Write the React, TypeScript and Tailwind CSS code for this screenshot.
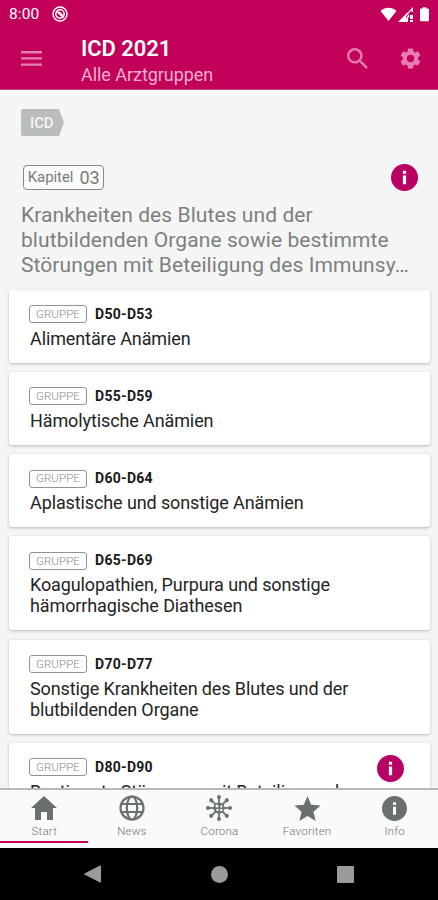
import React from "react";

type Group = { code: string; lines: string[]; info?: boolean; height: string };

const groups: Group[] = [
  { code: "D50-D53", lines: ["Alimentäre Anämien"], height: "h-[73px]" },
  { code: "D55-D59", lines: ["Hämolytische Anämien"], height: "h-[73px]" },
  { code: "D60-D64", lines: ["Aplastische und sonstige Anämien"], height: "h-[73px]" },
  { code: "D65-D69", lines: ["Koagulopathien, Purpura und sonstige", "hämorrhagische Diathesen"], height: "h-[94px]" },
  { code: "D70-D77", lines: ["Sonstige Krankheiten des Blutes und der", "blutbildenden Organe"], height: "h-[94px]" },
  { code: "D80-D90", lines: ["Bestimmte Störungen mit Beteiligung des"], info: true, height: "h-[94px]" },
];

function InfoIcon({ className }: { className: string }) {
  return (
    <svg viewBox="2 2 20 20" className={className} fill="currentColor">
      <circle cx="12" cy="12" r="10" />
      <path d="M10.8 10.6h2.4v6.4h-2.4zM10.8 7h2.4v2.2h-2.4z" fill="#fff" />
    </svg>
  );
}

function StatusBar() {
  return (
    <div className="flex h-7 items-center pl-[9px] pr-2 text-white">
      <span className="w-[43px] text-[15.500px] leading-7 tracking-[0.1px]">8:00</span>
      <svg viewBox="0 0 16 16" className="size-4" fill="none" stroke="#fff">
        <circle cx="8" cy="8" r="7" strokeWidth="1.4" />
        <circle cx="8" cy="8" r="4.2" strokeWidth="1.5" />
        <path d="M4.5 5l7 6.5M7 6l4 4" strokeWidth="1.7" />
      </svg>
      <div className="ml-auto flex items-center">
        <svg viewBox="0 0 17 15" className="h-[14px] w-[17px]" fill="#fff">
          <path d="M8.5 15L0 4.3C4.8-.3 12.200-.3 17 4.300z" />
        </svg>
        <svg viewBox="0 0 16 16" className="ml-px h-4 w-4" fill="#fff">
          <path d="M0 16L15 1v5h-1.500V4L8 10.500V16z" />
          <path d="M8 12.500L11 8v3l-1 1v4H8zM12 9h3v4h-3zM12 14h3v2h-3z" />
        </svg>
        <svg viewBox="0 0 10 16" className="mr-px ml-[6px] h-4 w-[9px]" fill="#fff">
          <path d="M1 2h2V.5h4V2h2q1 0 1 1v12q0 1-1 1H1q-1 0-1-1V3q0-1 1-1z" />
        </svg>
      </div>
    </div>
  );
}

function Header() {
  return (
    <header className="h-[90px] shrink-0 border-b border-[#b44f7d] bg-[#c30059]">
      <StatusBar />
      <div className="flex h-[61px] items-center pl-[21px] pr-[17px] text-[#e580ae]">
        <svg viewBox="0 0 21 15" className="h-[15px] w-[21px]" fill="currentColor">
          <path d="M0 0h21v2.400H0zM0 6.200h21v2.400H0zM0 12.400h21v2.400H0z" />
        </svg>
        <div className="ml-[39px] flex-1 pt-[6px] whitespace-nowrap">
          <h1 className="text-[22px] leading-[27px] font-semibold tracking-[-0.05px] text-white">ICD 2021</h1>
          <p className="text-[18px] leading-[26px] tracking-[-0.05px] text-[#f0b0cd]">Alle Arztgruppen</p>
        </div>
        <svg viewBox="3 3 17.500 17.500" className="size-[21px]" fill="currentColor">
          <path d="M15.500 14h-.79l-.28-.27A6.471 6.471 0 0 0 16 9.500 6.500 6.500 0 1 0 9.500 16c1.610 0 3.090-.59 4.230-1.570l.27.28v.79l5 4.990L20.490 19l-4.990-5zm-6 0C7.010 14 5 11.990 5 9.500S7.010 5 9.500 5 14 7.010 14 9.500 11.990 14 9.500 14z" />
        </svg>
        <svg viewBox="2 2 20 20" className="ml-8 size-[21px]" fill="currentColor">
          <path d="M19.140 12.940c.04-.3.06-.61.06-.94 0-.32-.02-.64-.07-.94l2.030-1.580c.18-.14.23-.41.12-.61l-1.920-3.320c-.12-.22-.37-.29-.59-.22l-2.390.96c-.5-.38-1.030-.7-1.620-.94l-.36-2.540c-.04-.24-.24-.41-.48-.41h-3.840c-.24 0-.43.17-.47.41l-.36 2.540c-.59.24-1.130.57-1.620.94l-2.390-.96c-.22-.08-.47 0-.59.22L2.740 8.870c-.12.21-.08.47.12.61l2.030 1.580c-.05.3-.09.63-.09.940s.02.64.07.940l-2.030 1.580c-.18.14-.23.41-.12.61l1.920 3.320c.12.22.37.29.59.22l2.390-.96c.5.38 1.030.7 1.620.94l.36 2.540c.05.24.24.41.48.41h3.840c.24 0 .44-.17.47-.41l.36-2.540c.59-.24 1.130-.56 1.620-.94l2.390.96c.22.08.47 0 .59-.22l1.920-3.320c.12-.22.07-.47-.12-.61l-2.010-1.580zM12 15.600c-1.980 0-3.600-1.620-3.600-3.600s1.620-3.600 3.600-3.600 3.600 1.620 3.600 3.600-1.620 3.600-3.600 3.600z" />
        </svg>
      </div>
    </header>
  );
}

function GroupCard({ group }: { group: Group }) {
  return (
    <li className={`${group.height} shrink-0 rounded-[3px] bg-white pt-[14px] pr-[26px] pl-5 shadow-[0_1px_3px_rgba(0,0,0,0.25)]`}>
      <div className="flex h-[21px] items-center">
        <span className="flex h-[18px] w-[58px] items-center justify-center rounded-[3px] border border-[#8d9493] pt-px text-[11.500px] font-light tracking-[0.1px] text-[#858c8b]">GRUPPE</span>
        <span className="-mt-px ml-[8px] text-[14px] leading-[18px] font-bold tracking-[0.3px] text-[#181818]">{group.code}</span>
        {group.info && <InfoIcon className="mt-[3px] ml-auto size-[27px] shrink-0 text-[#b90063]" />}
      </div>
      <div className="mt-[3px] pl-px text-[18px] leading-[21px] tracking-[-0.110px] whitespace-nowrap text-[#242424]">
        {group.lines.map((line) => (
          <p key={line}>{line}</p>
        ))}
      </div>
    </li>
  );
}

const dirs = [0, 45, 90, 135, 180, 225, 270, 315];

const tabs = [
  {
    label: "Start",
    icon: (
      <svg viewBox="0 0 26 24" className="h-6 w-[26px]" fill="currentColor">
        <path d="M13 0l13 12h-4v12h-6v-8h-6v8H4V12H0z" />
      </svg>
    ),
  },
  {
    label: "News",
    icon: (
      <svg viewBox="0 0 26 26" className="ml-px size-[26px]" fill="none" stroke="currentColor" strokeWidth="2.200">
        <circle cx="13" cy="13" r="11.500" />
        <ellipse cx="13" cy="13" rx="5.200" ry="11.500" />
        <path d="M2.500 9h21M2.500 17h21" />
      </svg>
    ),
  },
  {
    label: "Corona",
    icon: (
      <svg viewBox="-14 -14 28 28" className="size-7" fill="currentColor">
        <path fillRule="evenodd" d="M0-5.600A5.600 5.600 0 1 0 0 5.600 5.600 5.600 0 1 0 0-5.600zM-2-3.500a1.500 1.500 0 1 1 0 3 1.500 1.500 0 0 1 0-3zM2.300-2.800a1.200 1.200 0 1 1 0 2.400 1.200 1.200 0 0 1 0-2.400zM-1.500.7a1.200 1.200 0 1 1 0 2.400 1.200 1.200 0 0 1 0-2.400zM2.200.7a1.300 1.300 0 1 1 0 2.600 1.300 1.300 0 0 1 0-2.600z" />
        {dirs.map((d) => (
          <g key={d} transform={`rotate(${d})`}>
            <path d="M-.9-11H.9v6H-.9z" />
            <circle cx="0" cy="-11" r="2" />
          </g>
        ))}
      </svg>
    ),
  },
  {
    label: "Favoriten",
    icon: (
      <svg viewBox="2 2 20 19" className="ml-px h-[25px] w-[27px]" fill="currentColor">
        <path d="M12 17.270L18.180 21l-1.640-7.030L22 9.240l-7.190-.61L12 2 9.190 8.630 2 9.240l5.460 4.730L5.820 21z" />
      </svg>
    ),
  },
  { label: "Info", icon: <InfoIcon className="size-[25px]" /> },
];

function BottomTabs() {
  return (
    <nav className="grid h-[60px] shrink-0 grid-cols-5 border-t-2 border-[#b8b8b8] bg-[#fafafa] text-[#69716f]">
      {tabs.map((tab, i) => (
        <div key={tab.label} className={`flex flex-col items-center border-b-2 ${i === 0 ? "border-[#c30059]" : "border-transparent"} mb-[5px]`}>
          <div className="mt-1 flex h-[28px] items-center justify-center">{tab.icon}</div>
          <span className="mt-[2px] pl-px text-[11.500px] leading-[15px] font-light tracking-[0.2px] text-[#6f7674]">{tab.label}</span>
        </div>
      ))}
    </nav>
  );
}

function SystemBar() {
  return (
    <div className="flex h-[52px] shrink-0 items-center bg-black pl-[84px] text-[#9b9b9b]">
      <svg viewBox="0 0 17 18" className="h-[18px] w-[17px]" fill="currentColor">
        <path d="M16 0.500q1 0 1 1v15q0 1-1 1L.5 9.600q-1-.6 0-1.200z" />
      </svg>
      <span className="ml-[110px] size-[17px] rounded-full bg-current" />
      <span className="ml-[109px] size-[17px] rounded-[1px] bg-current" />
    </div>
  );
}

export default function App() {
  return (
    <div className="flex h-[900px] w-[438px] flex-col overflow-hidden bg-[#f5f5f5] font-[Roboto,sans-serif]">
      <Header />
      <main className="flex min-h-0 flex-1 flex-col overflow-hidden">
        <section className="h-[199.500px] shrink-0 pt-[19px] pr-5 pl-[21px]">
          <div className="h-[27px] w-[43px] rounded-l-[2px] bg-[#b9bebd] pl-[9px] text-[15px] leading-[28px] font-medium tracking-[-0.1px] text-[#f5f5f5] [clip-path:polygon(0_0,38px_0,43px_50%,38px_100%,0_100%)]">ICD</div>
          <div className="mt-[27px] flex h-[28px] items-center justify-between">
            <div className="ml-[2px] flex h-[25px] w-[81px] items-center justify-center rounded-[4px] border border-[#858a89] bg-[#fbfbfb] pt-px whitespace-nowrap text-[#777c7b]">
              <span className="text-[15px] tracking-[-0.05px]">Kapitel</span>
              <span className="ml-[6px] text-[18px] tracking-[-0.2px]">03</span>
            </div>
            <InfoIcon className="size-[27px] text-[#b90063]" />
          </div>
          <h2 className="mt-[12px] text-[21px] leading-[24.800px] tracking-[0.080px] whitespace-nowrap text-[#7b807f]">
            Krankheiten des Blutes und der
            <br />
            blutbildenden Organe sowie bestimmte
            <br />
            Störungen mit Beteiligung des Immunsy…
          </h2>
        </section>
        <ul className="flex flex-col gap-[9.300px] pr-2 pl-[9px]">
          {groups.map((g) => (
            <GroupCard key={g.code} group={g} />
          ))}
        </ul>
      </main>
      <BottomTabs />
      <SystemBar />
    </div>
  );
}
